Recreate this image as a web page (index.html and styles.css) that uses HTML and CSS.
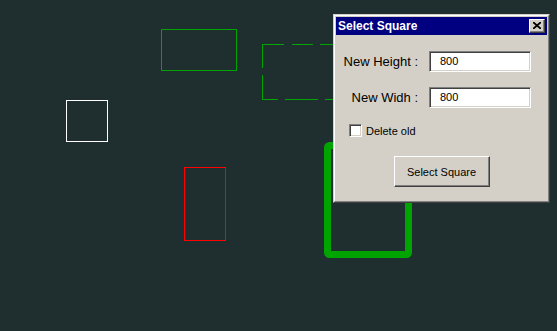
FILE: index.html
```html
<!DOCTYPE html>
<html lang="en">
<head>
  <meta charset="UTF-8" />
  <title>Select Square</title>
  <link rel="stylesheet" href="styles.css">
</head>
<body>

  <!-- Drawing canvas -->
  <svg class="canvas" width="557" height="331" viewBox="0 0 557 331">
    <rect x="66.5" y="100.5" width="41" height="41" class="shape white" />
    <rect x="161.5" y="29.5" width="75" height="41" class="shape green" />
    <rect x="184.5" y="167.5" width="41" height="73" class="shape red" />

    <!-- dashed selection -->
    <g class="shape green">
      <line x1="262" y1="44.5" x2="284" y2="44.5" />
      <line x1="292" y1="44.5" x2="313" y2="44.5" />
      <line x1="320" y1="44.5" x2="340" y2="44.5" />
      <line x1="262.5" y1="44" x2="262.5" y2="68" />
      <line x1="262.5" y1="75" x2="262.5" y2="100" />
      <line x1="262" y1="99.5" x2="278" y2="99.5" />
      <line x1="285" y1="99.5" x2="318" y2="99.5" />
      <line x1="325" y1="99.5" x2="340" y2="99.5" />
    </g>

    <rect x="327.5" y="145.5" width="81" height="109" rx="2" class="thick" />
  </svg>

  <!-- Dialog -->
  <div class="dialog">
    <div class="dialog-inner">
      <div class="titlebar">
        <span class="title">Select Square</span>
        <button class="close-btn">
          <svg width="8" height="7" viewBox="0 0 8 7">
            <path d="M0 0 L8 7 M8 0 L0 7" stroke="#000" stroke-width="1.8" fill="none" />
          </svg>
        </button>
      </div>

      <div class="dialog-body">
        <div class="fields">
          <label class="field-label">New Height :</label>
          <div class="textbox">800</div>
          <label class="field-label">New Widh :</label>
          <div class="textbox">800</div>
        </div>

        <div class="check-row">
          <span class="checkbox"></span>
          <span>Delete old</span>
        </div>

        <div class="btn-row">
          <button class="push-btn">Select Square</button>
        </div>
      </div>
    </div>
  </div>

</body>
</html>
```

FILE: styles.css
```css
body {
  margin: 0;
  background: #1f2f2f;
  font-family: 'Liberation Sans', Arial, sans-serif;
  width: 557px;
  height: 331px;
  overflow: hidden;
  position: relative;
}

.canvas {
  display: block;
  shape-rendering: crispEdges;
}

.shape {
  fill: none;
  stroke-width: 1;
}

.white { stroke: #ffffff; }
.green { stroke: #00a400; }
.red { stroke: #ff0000; }

.thick {
  fill: none;
  stroke: #00a400;
  stroke-width: 7;
  shape-rendering: auto;
}

/* classic window */
.dialog {
  position: absolute;
  left: 333px;
  top: 14px;
  width: 217px;
  height: 189px;
  box-sizing: border-box;
  border: 1px solid;
  border-color: #d4d0c8 #404040 #404040 #d4d0c8;
  background: #d4d0c8;
}

.dialog-inner {
  height: 100%;
  box-sizing: border-box;
  border: 1px solid;
  border-color: #ffffff #808080 #808080 #ffffff;
  padding: 1px;
}

.titlebar {
  height: 18px;
  background: #000080;
  display: flex;
  align-items: center;
  justify-content: space-between;
  padding: 0 2px 0 2px;
}

.title {
  color: #ffffff;
  font-weight: bold;
  font-size: 12px;
}

.close-btn {
  width: 16px;
  height: 14px;
  padding: 0;
  margin: 0;
  background: #d4d0c8;
  border: 1px solid;
  border-color: #ffffff #404040 #404040 #ffffff;
  box-shadow: inset -1px -1px 0 #808080;
  display: flex;
  align-items: center;
  justify-content: center;
}

.close-btn svg {
  display: block;
  margin: 0 1px 1px 0;
}

.dialog-body {
  padding: 16px 0 0 7px;
}

.fields {
  display: grid;
  grid-template-columns: 75px 102px;
  column-gap: 11px;
  row-gap: 15px;
  align-items: center;
}

.field-label {
  font-size: 13px;
  color: #000;
  text-align: right;
}

.textbox {
  height: 21px;
  box-sizing: border-box;
  background: #fff;
  border: 1px solid;
  border-color: #808080 #ffffff #ffffff #808080;
  box-shadow: inset 1px 1px 0 #404040, inset -1px -1px 0 #d4d0c8;
  font-size: 11px;
  line-height: 19px;
  padding-left: 10px;
  color: #000;
}

.check-row {
  display: flex;
  align-items: center;
  gap: 4px;
  margin: 16px 0 0 6px;
  font-size: 11px;
  color: #000;
}

.checkbox {
  width: 13px;
  height: 13px;
  box-sizing: border-box;
  background: #fff;
  border: 1px solid;
  border-color: #808080 #ffffff #ffffff #808080;
  box-shadow: inset 1px 1px 0 #404040, inset -1px -1px 0 #d4d0c8;
}

.btn-row {
  display: flex;
  justify-content: center;
  margin: 19px 0 0 -7px;
}

.push-btn {
  width: 96px;
  height: 31px;
  background: #d4d0c8;
  border: 1px solid;
  border-color: #ffffff #404040 #404040 #ffffff;
  box-shadow: inset -1px -1px 0 #808080;
  font-family: 'Liberation Sans', Arial, sans-serif;
  font-size: 11px;
  color: #000;
  padding: 0;
}
```
